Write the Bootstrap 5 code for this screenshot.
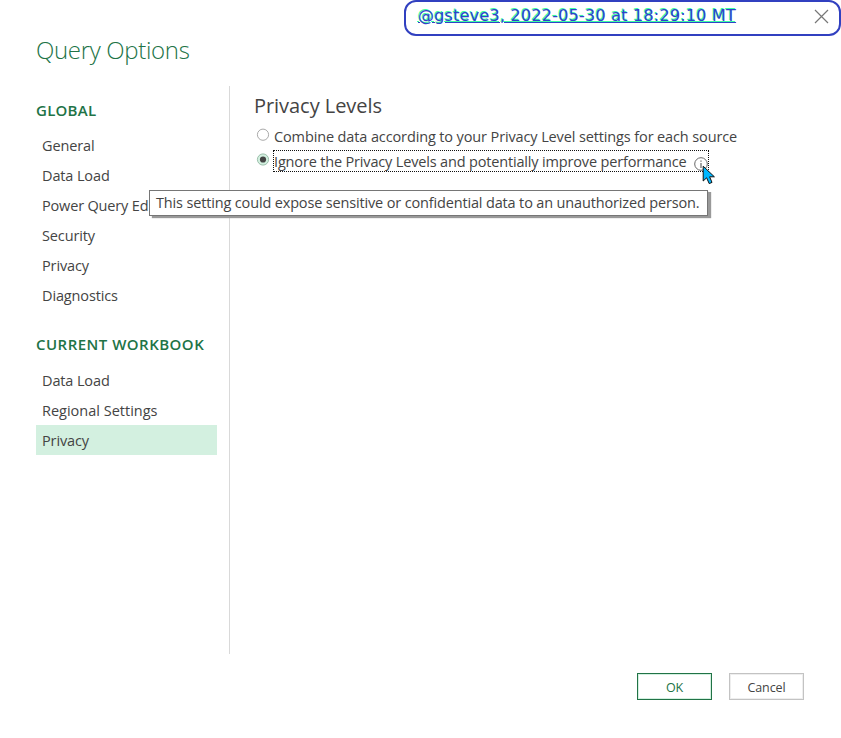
<!DOCTYPE html>
<html lang="en"><head><meta charset="utf-8"><title>Query Options</title>
<link rel="stylesheet" href="https://cdn.jsdelivr.net/npm/bootstrap@5.3.0/dist/css/bootstrap.min.css">
<style>
body{width:841px;height:738px;overflow:hidden;background:#fff;color:#444;font:14.5px/20px "Open Sans","Noto Sans",sans-serif}
.stamp{width:437px;height:36px;border:2px solid #3140c0;border-radius:12px;padding:0 10px 5px 12px}
.stamp a{font:16px/20px "DejaVu Sans",sans-serif;letter-spacing:.23px;color:#3042c8;text-shadow:-1px -1px #3dffa0;white-space:nowrap}
.close-mark{width:15px;height:15px;margin-top:1px}
.title{font-size:24px;line-height:34px;font-weight:300;letter-spacing:-.33px;color:#217346;margin:-3px 0 0 36px}
.panes{height:568px;margin-top:19px}
.side{width:230px;border-right:1px solid #d9d9d9;padding:14px 12px 0 36px}
.group{font-size:15px;line-height:20px;font-weight:600;letter-spacing:.25px;color:#217346;margin:0 0 10px}
.group.book{letter-spacing:.48px;margin:24px 0 11px}
.side .nav-link{height:30px;padding:6px 6px 4px;color:#444;line-height:20px;letter-spacing:-.13px;white-space:nowrap}
.side .nav-link.active{background:#d3f0e0}
.side .regional{letter-spacing:0}
.side .cut{width:113px;padding-right:0;overflow:hidden;letter-spacing:-.17px}
.main{padding:7px 0 0 24px}
.main h2{font-size:20px;line-height:26px;margin:0 0 6px;font-weight:400;letter-spacing:-.05px}
.opt{height:25px;padding-left:2px;white-space:nowrap}
.opt .opt-text{height:22px;line-height:20px;padding:2px 0 0 1px;letter-spacing:-.125px}
.opt .radio{width:14px;height:14px;margin:2px 3px 0 0}
.opt .opt-text.focused{width:436px;letter-spacing:-.165px;outline:1px dotted #111;outline-offset:-1px}
.info{width:14px;height:14px;margin:5px 0 0 7px}
.tip{left:149px;top:190px;width:559px;height:26px;border:1px solid #767676;background:#fff;box-shadow:3px 2px 1px #999;padding:2px 0 0 6px;white-space:nowrap;letter-spacing:-.155px}
.tip{clip-path:polygon(0 0,560px 0,560px 2px,565px 2px,565px 32px,2px 32px,2px 26px,0 26px)}
.pointer{left:702px;top:165px;width:14px;height:20px}
.actions{gap:17px;padding:19px 37px 0 0}
.actions .btn{width:75px;height:27px;padding:2px 0 0;border-radius:0;font-size:12.5px;line-height:23px;border:1px solid #c3c3c3;box-shadow:inset 0 0 0 1px #eee;color:#444;letter-spacing:-.1px}
.actions .ok{border-color:#217346;color:#217346;box-shadow:inset 0 0 0 1px #d3f0e0}
</style></head>
<body class="position-relative">
<div class="stamp ms-auto d-flex align-items-center justify-content-between"><a href="#">@gsteve3, 2022-05-30 at 18:29:10 MT</a>
<svg class="close-mark" viewBox="0 0 15 15" stroke="#777" stroke-width="1.2"><path d="M1 1l13 13M14 1L1 14"/></svg></div>
<h1 class="title">Query Options</h1>
<div class="panes d-flex">
<div class="side flex-shrink-0">
<h2 class="group">GLOBAL</h2>
<nav class="nav flex-column"><a class="nav-link">General</a><a class="nav-link">Data Load</a><a class="nav-link cut">Power Query Ed</a><a class="nav-link">Security</a><a class="nav-link">Privacy</a><a class="nav-link">Diagnostics</a></nav>
<h2 class="group book">CURRENT WORKBOOK</h2>
<nav class="nav flex-column"><a class="nav-link">Data Load</a><a class="nav-link regional">Regional Settings</a><a class="nav-link active">Privacy</a></nav>
</div>
<div class="main"><h2>Privacy Levels</h2>
<div class="opt d-flex"><svg class="radio" viewBox="0 0 14 14"><circle cx="7" cy="7.7" r="5.6" fill="#fff" stroke="#aaa"/></svg><span class="opt-text">Combine data according to your Privacy Level settings for each source</span></div>
<div class="opt d-flex"><svg class="radio" viewBox="0 0 14 14"><circle cx="7" cy="7.5" r="5.6" fill="#d3f0e0" stroke="#9bbfab"/><circle cx="7" cy="7.5" r="3.1" fill="#444"/></svg><span class="opt-text focused d-flex">Ignore the Privacy Levels and potentially improve performance
<svg class="info" viewBox="0 0 14 14" fill="none" stroke="#666"><circle cx="7" cy="7" r="6.3"/><path d="M7 6v5M7 3.4v1.3" stroke-width="1.2"/></svg></span></div>
</div></div>
<div class="actions d-flex justify-content-end"><button class="btn ok">OK</button><button class="btn">Cancel</button></div>
<div class="tip position-absolute">This setting could expose sensitive or confidential data to an unauthorized person.</div>
<svg class="pointer position-absolute" viewBox="0 0 14 20"><path d="M1.2 1.2V16L4.6 12.8L7.2 18.6L10 17.4L7.6 11.8H12.4Z" fill="#00b7ff" stroke="#111"/></svg>
<script src="https://cdn.jsdelivr.net/npm/bootstrap@5.3.0/dist/js/bootstrap.bundle.min.js"></script>
</body></html>
